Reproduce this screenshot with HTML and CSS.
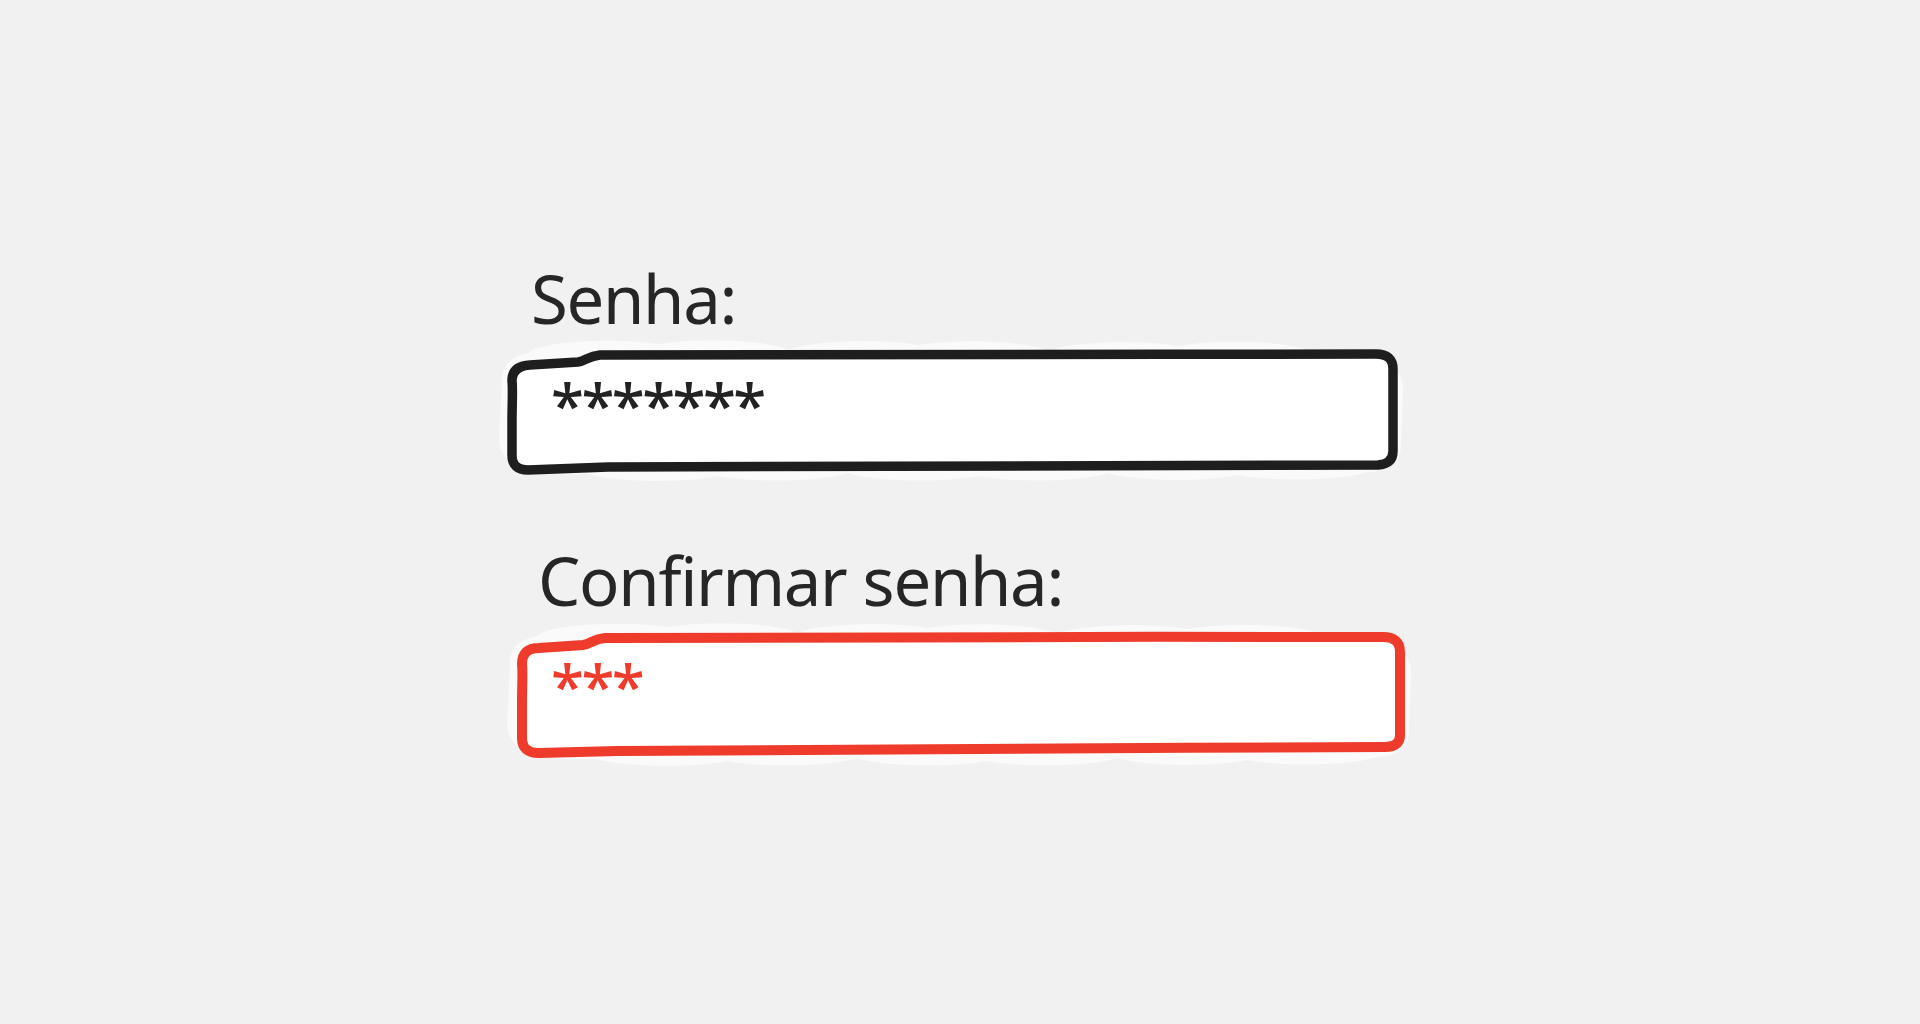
FILE: index.html
```html
<!DOCTYPE html>
<html lang="pt">
<head>
<meta charset="utf-8">
<title>Senha</title>
<link rel="stylesheet" href="styles.css">
</head>
<body>
<main class="form">
  <div class="field field-pass">
    <label class="label">Senha:</label>
    <div class="box">
      <svg class="sketch" viewBox="0 0 889 123" preserveAspectRatio="none" aria-hidden="true">
        <path class="cloud" d="M -6,34 Q -8,10 20,4 A 80 14 0 0 1 150,-5 A 80 14 0 0 1 280,1 A 80 14 0 0 1 410,-4 A 80 14 0 0 1 540,2 A 80 14 0 0 1 670,-3 A 80 14 0 0 1 800,1 Q 896,1 895,40 L 893,96 Q 893,122 860,123 A 80 14 0 0 1 730,126 A 80 14 0 0 1 600,124 A 80 14 0 0 1 470,127 A 80 14 0 0 1 340,124 A 80 14 0 0 1 210,127 A 80 14 0 0 1 80,125 Q -9,129 -9,90 Z"/>
        <path class="fill" d="M 22,16 L 70,13 C 78,12 80,7 92,6 C 300,4 600,6 868,5 Q 885,5 885,20 L 885,102 Q 885,115 870,116 C 600,117 300,116 100,118 L 20,121 Q 4,121 4,106 L 4,72 C 4,55 5,40 4,32 Q 4,17 22,16 Z"/>
        <path class="stroke dark" d="M 22,16 L 70,13 C 78,12 80,7 92,6 C 300,4 600,6 868,5 Q 885,5 885,20 L 885,102 Q 885,115 870,116 C 600,117 300,116 100,118 L 20,121 Q 4,121 4,106 L 4,72 C 4,55 5,40 4,32 Q 4,17 22,16 Z"/>
      </svg>
      <span class="value">*******</span>
    </div>
  </div>
  <div class="field field-confirm">
    <label class="label">Confirmar senha:</label>
    <div class="box">
      <svg class="sketch" viewBox="0 0 888 126" preserveAspectRatio="none" aria-hidden="true">
        <path class="cloud" d="M -7,34 Q -9,10 20,4 A 80 14 0 0 1 150,-5 A 80 14 0 0 1 280,1 A 80 14 0 0 1 410,-4 A 80 14 0 0 1 540,2 A 80 14 0 0 1 670,-3 A 80 14 0 0 1 800,1 Q 895,1 894,40 L 892,98 Q 892,124 860,125 A 80 14 0 0 1 730,128 A 80 14 0 0 1 600,126 A 80 14 0 0 1 470,129 A 80 14 0 0 1 340,126 A 80 14 0 0 1 210,129 A 80 14 0 0 1 80,127 Q -10,131 -10,92 Z"/>
        <path class="fill" d="M 22,16 L 66,13 C 74,12 76,7 88,6 C 300,4 600,5 866,5 Q 883,5 883,20 L 883,101 Q 884,115 868,115 C 600,116 300,117 100,119 L 22,121 Q 5,121 5,106 L 5,70 C 5,55 6,40 5,32 Q 5,16 22,16 Z"/>
        <path class="stroke red" d="M 22,16 L 66,13 C 74,12 76,7 88,6 C 300,4 600,5 866,5 Q 883,5 883,20 L 883,101 Q 884,115 868,115 C 600,116 300,117 100,119 L 22,121 Q 5,121 5,106 L 5,70 C 5,55 6,40 5,32 Q 5,16 22,16 Z"/>
      </svg>
      <span class="value value-error">***</span>
    </div>
  </div>
</main>
</body>
</html>
```

FILE: styles.css
```css
html, body {
  margin: 0;
  padding: 0;
  background: #f1f1f1;
}

body {
  font-family: "Noto Sans", "Open Sans", sans-serif;
  color: #232323;
  height: 1024px;
  overflow: hidden;
}

.form {
  display: flex;
  flex-direction: column;
  width: 897px;
  margin-left: 508px;
  padding-top: 265px;
}

.field {
  display: flex;
  flex-direction: column;
}

.label {
  position: relative;
  z-index: 1;
  display: block;
  font-size: 67px;
  line-height: 67px;
  letter-spacing: -1.3px;
  color: #262626;
}

.field-pass .label {
  padding-left: 23px;
  margin-bottom: 17px;
}

.field-pass .box {
  width: 889px;
  height: 123px;
}

.field-confirm {
  margin-top: 75px;
  margin-left: 9px;
}

.field-confirm .label {
  padding-left: 21px;
  margin-bottom: 18px;
}

.field-confirm .box {
  width: 888px;
  height: 126px;
}

.box {
  position: relative;
}

.sketch {
  position: absolute;
  left: 0;
  top: 0;
  width: 100%;
  height: 100%;
  overflow: visible;
}

.cloud {
  fill: #fafafa;
}

.fill {
  fill: #ffffff;
}

.stroke {
  fill: none;
  stroke-linecap: round;
  stroke-linejoin: round;
}

.stroke.dark {
  stroke: #1e1e1e;
  stroke-width: 9.5;
}

.stroke.red {
  stroke: #ee3b2b;
  stroke-width: 10;
}

.value {
  position: relative;
  display: block;
  font-size: 60px;
  line-height: 60px;
  font-weight: 500;
  letter-spacing: -2.5px;
  color: #222;
  padding-left: 43px;
  padding-top: 25px;
}

.value-error {
  color: #ee3b2b;
  padding-left: 34px;
  padding-top: 23px;
}
```
